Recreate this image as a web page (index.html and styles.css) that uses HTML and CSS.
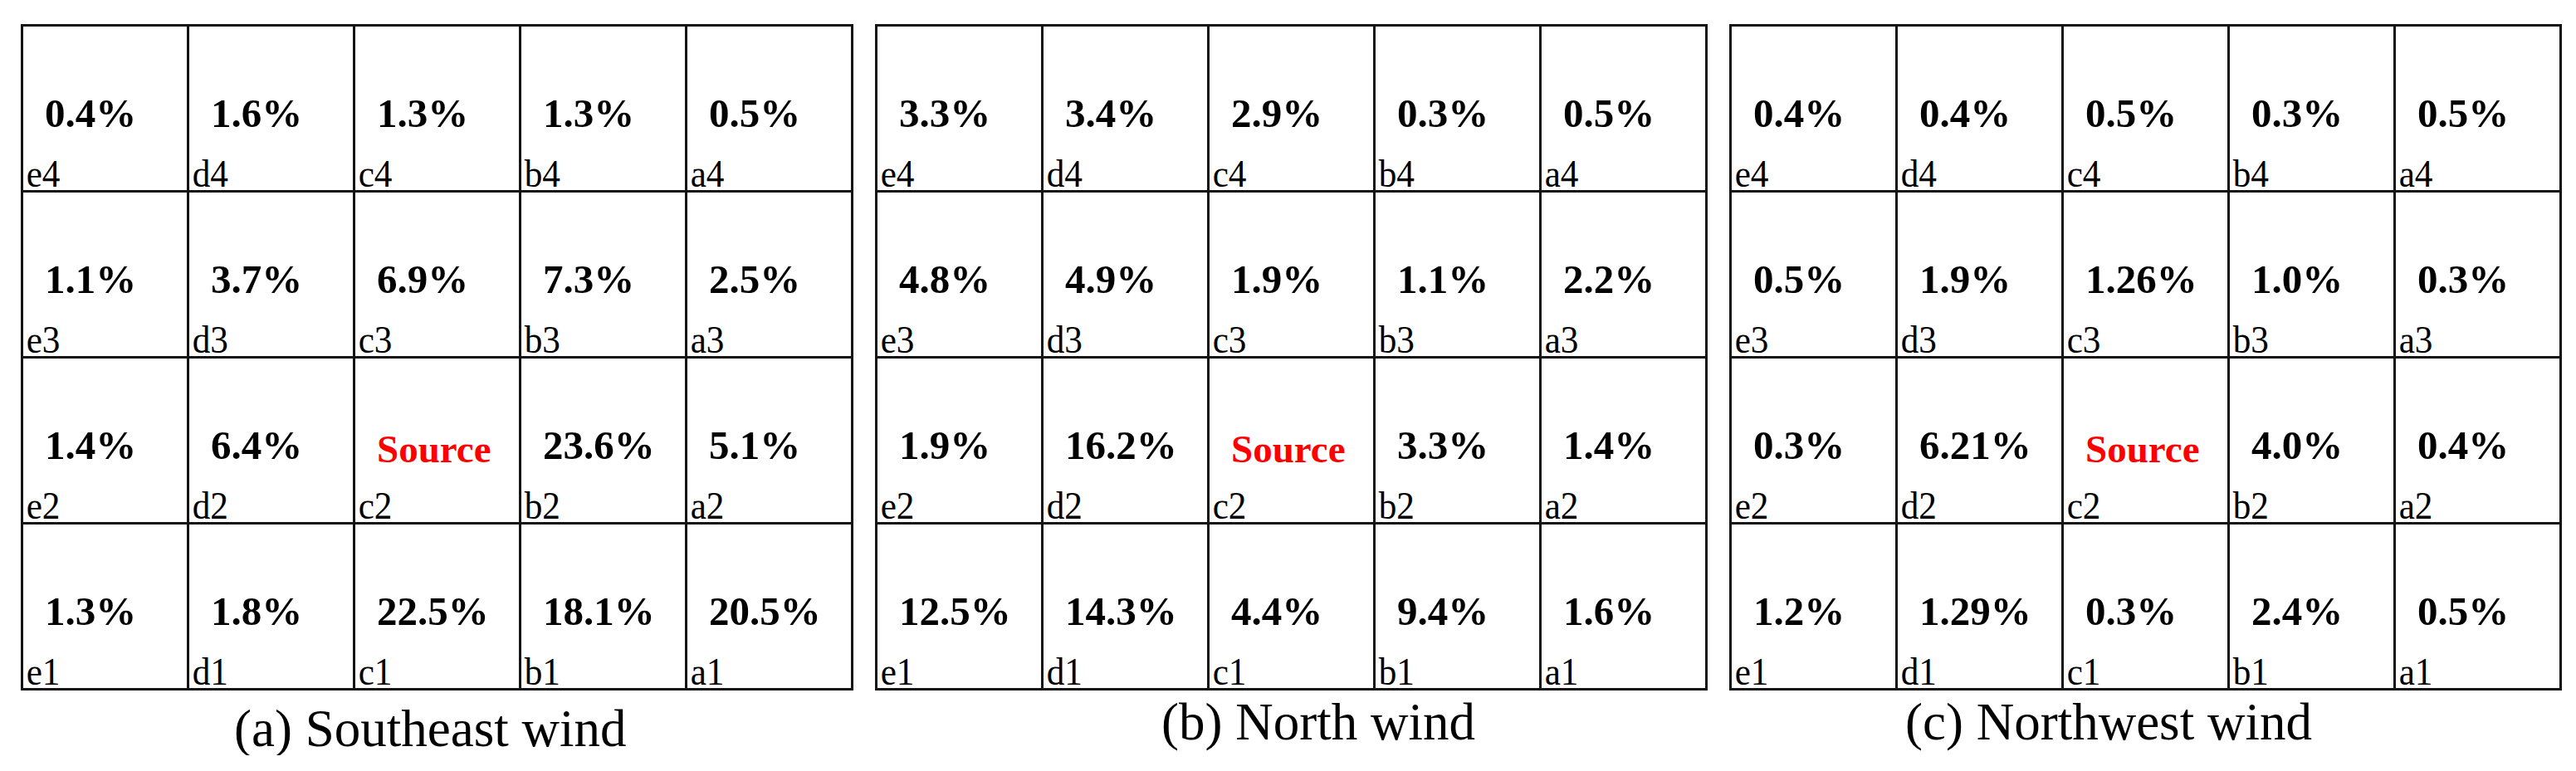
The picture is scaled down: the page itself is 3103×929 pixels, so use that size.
FILE: index.html
```html
<!DOCTYPE html>
<html lang="en">
<head>
<meta charset="utf-8">
<title>Wind distribution grids</title>
<link rel="stylesheet" href="styles.css">
</head>
<body>
<div class="figure">
  <section class="panel panel-a">
    <div class="grid">
      <div class="cell"><span class="val">0.4%</span><span class="lbl">e4</span></div>
      <div class="cell"><span class="val">1.6%</span><span class="lbl">d4</span></div>
      <div class="cell"><span class="val">1.3%</span><span class="lbl">c4</span></div>
      <div class="cell"><span class="val">1.3%</span><span class="lbl">b4</span></div>
      <div class="cell"><span class="val">0.5%</span><span class="lbl">a4</span></div>
      <div class="cell"><span class="val">1.1%</span><span class="lbl">e3</span></div>
      <div class="cell"><span class="val">3.7%</span><span class="lbl">d3</span></div>
      <div class="cell"><span class="val">6.9%</span><span class="lbl">c3</span></div>
      <div class="cell"><span class="val">7.3%</span><span class="lbl">b3</span></div>
      <div class="cell"><span class="val">2.5%</span><span class="lbl">a3</span></div>
      <div class="cell"><span class="val">1.4%</span><span class="lbl">e2</span></div>
      <div class="cell"><span class="val">6.4%</span><span class="lbl">d2</span></div>
      <div class="cell"><span class="val src">Source</span><span class="lbl">c2</span></div>
      <div class="cell"><span class="val">23.6%</span><span class="lbl">b2</span></div>
      <div class="cell"><span class="val">5.1%</span><span class="lbl">a2</span></div>
      <div class="cell"><span class="val">1.3%</span><span class="lbl">e1</span></div>
      <div class="cell"><span class="val">1.8%</span><span class="lbl">d1</span></div>
      <div class="cell"><span class="val">22.5%</span><span class="lbl">c1</span></div>
      <div class="cell"><span class="val">18.1%</span><span class="lbl">b1</span></div>
      <div class="cell"><span class="val">20.5%</span><span class="lbl">a1</span></div>
    </div>
    <p class="caption">(a) Southeast wind</p>
  </section>
  <section class="panel panel-b">
    <div class="grid">
      <div class="cell"><span class="val">3.3%</span><span class="lbl">e4</span></div>
      <div class="cell"><span class="val">3.4%</span><span class="lbl">d4</span></div>
      <div class="cell"><span class="val">2.9%</span><span class="lbl">c4</span></div>
      <div class="cell"><span class="val">0.3%</span><span class="lbl">b4</span></div>
      <div class="cell"><span class="val">0.5%</span><span class="lbl">a4</span></div>
      <div class="cell"><span class="val">4.8%</span><span class="lbl">e3</span></div>
      <div class="cell"><span class="val">4.9%</span><span class="lbl">d3</span></div>
      <div class="cell"><span class="val">1.9%</span><span class="lbl">c3</span></div>
      <div class="cell"><span class="val">1.1%</span><span class="lbl">b3</span></div>
      <div class="cell"><span class="val">2.2%</span><span class="lbl">a3</span></div>
      <div class="cell"><span class="val">1.9%</span><span class="lbl">e2</span></div>
      <div class="cell"><span class="val">16.2%</span><span class="lbl">d2</span></div>
      <div class="cell"><span class="val src">Source</span><span class="lbl">c2</span></div>
      <div class="cell"><span class="val">3.3%</span><span class="lbl">b2</span></div>
      <div class="cell"><span class="val">1.4%</span><span class="lbl">a2</span></div>
      <div class="cell"><span class="val">12.5%</span><span class="lbl">e1</span></div>
      <div class="cell"><span class="val">14.3%</span><span class="lbl">d1</span></div>
      <div class="cell"><span class="val">4.4%</span><span class="lbl">c1</span></div>
      <div class="cell"><span class="val">9.4%</span><span class="lbl">b1</span></div>
      <div class="cell"><span class="val">1.6%</span><span class="lbl">a1</span></div>
    </div>
    <p class="caption">(b) North wind</p>
  </section>
  <section class="panel panel-c">
    <div class="grid">
      <div class="cell"><span class="val">0.4%</span><span class="lbl">e4</span></div>
      <div class="cell"><span class="val">0.4%</span><span class="lbl">d4</span></div>
      <div class="cell"><span class="val">0.5%</span><span class="lbl">c4</span></div>
      <div class="cell"><span class="val">0.3%</span><span class="lbl">b4</span></div>
      <div class="cell"><span class="val">0.5%</span><span class="lbl">a4</span></div>
      <div class="cell"><span class="val">0.5%</span><span class="lbl">e3</span></div>
      <div class="cell"><span class="val">1.9%</span><span class="lbl">d3</span></div>
      <div class="cell"><span class="val">1.26%</span><span class="lbl">c3</span></div>
      <div class="cell"><span class="val">1.0%</span><span class="lbl">b3</span></div>
      <div class="cell"><span class="val">0.3%</span><span class="lbl">a3</span></div>
      <div class="cell"><span class="val">0.3%</span><span class="lbl">e2</span></div>
      <div class="cell"><span class="val">6.21%</span><span class="lbl">d2</span></div>
      <div class="cell"><span class="val src">Source</span><span class="lbl">c2</span></div>
      <div class="cell"><span class="val">4.0%</span><span class="lbl">b2</span></div>
      <div class="cell"><span class="val">0.4%</span><span class="lbl">a2</span></div>
      <div class="cell"><span class="val">1.2%</span><span class="lbl">e1</span></div>
      <div class="cell"><span class="val">1.29%</span><span class="lbl">d1</span></div>
      <div class="cell"><span class="val">0.3%</span><span class="lbl">c1</span></div>
      <div class="cell"><span class="val">2.4%</span><span class="lbl">b1</span></div>
      <div class="cell"><span class="val">0.5%</span><span class="lbl">a1</span></div>
    </div>
    <p class="caption">(c) Northwest wind</p>
  </section>
</div>
</body>
</html>
```

FILE: styles.css
```css
html, body {
  margin: 0;
  padding: 0;
  background: #ffffff;
}

body {
  font-family: "Liberation Serif", "Times New Roman", serif;
  color: #000000;
}

.figure {
  display: flex;
  align-items: flex-start;
  gap: 26px;
  padding: 29px 0 0 25px;
}

.panel {
  display: flex;
  flex-direction: column;
}

.grid {
  display: grid;
  grid-template-columns: repeat(5, 197px);
  grid-template-rows: repeat(4, 197px);
  gap: 3px;
  padding: 3px;
  background: #141414;
}

.cell {
  background: #ffffff;
  display: flex;
  flex-direction: column;
  justify-content: space-between;
  align-items: flex-start;
}

.val {
  font-size: 49px;
  line-height: 49px;
  font-weight: 700;
  padding: 80px 0 0 26px;
  white-space: nowrap;
}

.val.src {
  color: #ff0000;
  font-size: 47px;
  padding-top: 85px;
}

.lbl {
  display: inline-block;
  font-size: 47px;
  line-height: 40px;
  padding-left: 4px;
  transform: scaleX(0.92);
  transform-origin: left bottom;
  white-space: nowrap;
}

.caption {
  margin: 7px 0 0 0;
  font-size: 63px;
  line-height: 63px;
  white-space: nowrap;
}

.panel-a .caption {
  margin-top: 15px;
  padding-left: 257px;
}

.panel-b .caption {
  padding-left: 345px;
}

.panel-c .caption {
  padding-left: 212px;
}
```
